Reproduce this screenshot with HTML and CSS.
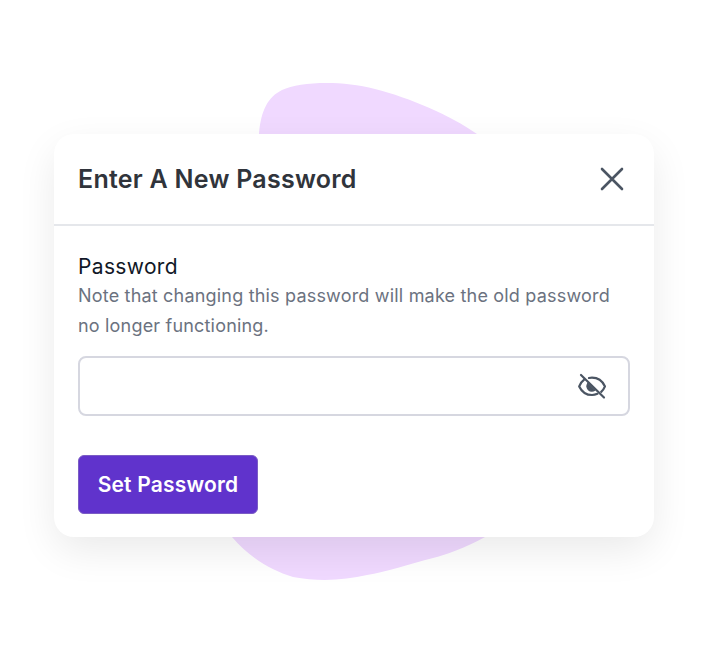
FILE: index.html
```html
<!DOCTYPE html>
<html lang="en">
<head>
<meta charset="utf-8">
<title>Enter A New Password</title>
<link rel="stylesheet" href="styles.css">
</head>
<body>
<main class="stage">
  <svg class="blob" width="708" height="672" viewBox="0 0 708 672" aria-hidden="true">
    <path class="blob-shape" d="M259 134C261 110 268 97 282 90C300 82 340 80 375 89C410 98 450 115 477 134C520 170 560 300 540 430C530 490 510 525 485 537C465 548 445 555 433 558C410 564 385 572 367 575C345 580 320 582 293 577C270 570 248 556 232 537C190 500 170 300 200 200C215 160 240 145 259 134Z"/>
  </svg>
  <section class="card">
    <header class="card-header">
      <h1 class="title">Enter A New Password</h1>
      <svg class="close" width="24" height="24" viewBox="0 0 24 24" aria-hidden="true">
        <path d="M2 2L22 22M22 2L2 22"/>
      </svg>
    </header>
    <div class="card-body">
      <label class="label">Password</label>
      <p class="note">Note that changing this password will make the old password no longer functioning.</p>
      <div class="input">
        <svg class="eye" width="28" height="28" viewBox="0 0 28 28" aria-hidden="true">
          <path d="M3 3L26 25.5"/>
          <path d="M6.4 7.4C4.2 9 2.4 11.4 1.2 14.4C3.8 19.8 8.6 23 14 23C15.8 23 17.6 22.6 19.4 21.8"/>
          <path d="M11 6C12 5.8 13 5.7 14 5.7C19.6 5.7 24.4 9 27 14.4C26.2 16.4 24.8 18.4 23.2 19.8"/>
          <path class="pupil" d="M9.8 11.2C9.2 12.2 8.9 13.2 8.9 14.3C8.9 17 11.2 19.1 13.9 19.1C15 19.1 16 18.8 16.8 18.2Z"/>
        </svg>
      </div>
      <button class="submit" type="button">Set Password</button>
    </div>
  </section>
</main>
</body>
</html>
```
FILE: styles.css
```css
html, body {
  margin: 0;
  padding: 0;
  background: #fff;
}
body {
  font-family: Inter, "Liberation Sans", sans-serif;
}
.stage {
  position: relative;
  width: 708px;
  height: 672px;
  padding: 134px 54px 0;
  box-sizing: border-box;
  overflow: hidden;
}
.blob {
  position: absolute;
  left: 0;
  top: 0;
}
.blob-shape {
  fill: #f0d9ff;
}
.card {
  position: relative;
  width: 600px;
  height: 403px;
  background: #fff;
  border-radius: 20px;
  box-shadow: 0 14px 40px -2px rgba(0, 0, 0, 0.09);
}
.card-header {
  display: flex;
  align-items: center;
  justify-content: space-between;
  height: 92px;
  padding: 0 30px 0 24px;
  box-sizing: border-box;
  border-bottom: 2px solid #e5e7eb;
}
.title {
  margin: 0;
  font-size: 25px;
  font-weight: 600;
  letter-spacing: 0.25px;
  color: #30343b;
}
.close path {
  fill: none;
  stroke: #4b5563;
  stroke-width: 2.6;
  stroke-linecap: round;
}
.card-body {
  display: flex;
  flex-direction: column;
  align-items: flex-start;
  padding: 27px 24px 0;
}
.label {
  font-size: 21px;
  line-height: 28px;
  letter-spacing: 0.35px;
  color: #111827;
}
.note {
  margin: 0;
  font-size: 18px;
  line-height: 30px;
  letter-spacing: 0.19px;
  color: #6b7280;
}
.input {
  display: flex;
  align-items: center;
  justify-content: flex-end;
  width: 552px;
  height: 60px;
  margin-top: 15px;
  padding: 0 10px;
  box-sizing: border-box;
  border: 2px solid #d6d7e0;
  border-radius: 8px;
  background: #fff;
}
.eye {
  margin-right: 12.5px;
}
.eye path {
  fill: none;
  stroke: #4b5563;
  stroke-width: 2.2;
  stroke-linecap: round;
  stroke-linejoin: round;
}
.eye .pupil {
  fill: #4b5563;
  stroke-width: 1.2;
}
.submit {
  margin-top: 39px;
  width: 180px;
  height: 59px;
  padding: 0;
  border: 1.5px solid #7a5cc4;
  border-radius: 6px;
  background: #6033cc;
  color: #fff;
  font-family: inherit;
  font-size: 21px;
  font-weight: 600;
  letter-spacing: 0.2px;
}
```
